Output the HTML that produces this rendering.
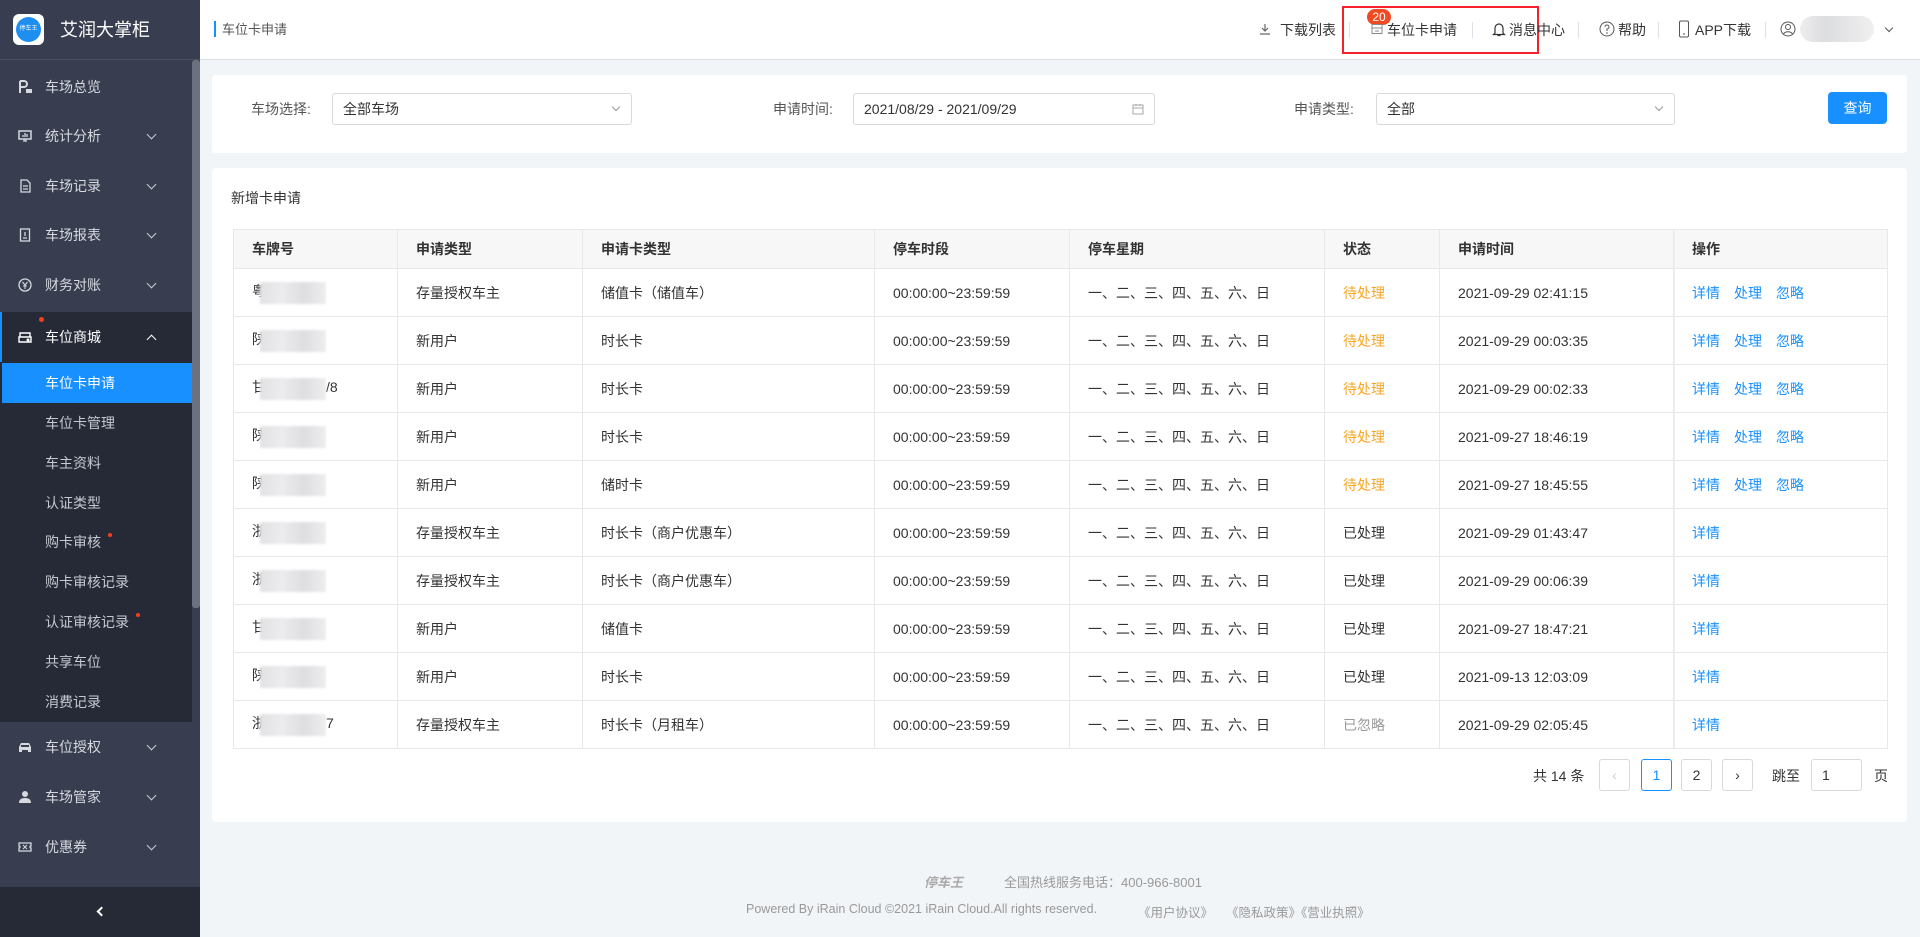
<!DOCTYPE html>
<html><head><meta charset="utf-8">
<style>
*{margin:0;padding:0;box-sizing:border-box}
body{width:1920px;height:937px;overflow:hidden;background:#f2f5f8;font-family:"Liberation Sans","Noto Sans CJK SC",sans-serif;font-size:14px;color:#333;position:relative}
.a{position:absolute}
.side{left:0;top:0;width:200px;height:937px;background:#383e4f}
.logo{left:0;top:0;width:200px;height:60px;background:#383e4f;border-bottom:1px solid #4a5061}
.mi{position:absolute;left:0;width:192px;height:50px;color:#d6d9e0;font-size:14px;line-height:50px}
.mi .ic{position:absolute;left:18px;top:18px;width:14px;height:14px}
.mi .t{position:absolute;left:45px}
.mi .ch{position:absolute;left:148px;top:20px;width:7px;height:7px;border-right:1.5px solid #c8ccd4;border-bottom:1.5px solid #c8ccd4;transform:rotate(45deg)}
.si{position:absolute;left:0;width:192px;height:40px;line-height:40px;padding-left:45px;color:#c6c9d0;font-size:14px}
.dot{position:absolute;width:5px;height:5px;border-radius:50%;background:#f5401e}
.hdr{left:200px;top:0;width:1720px;height:60px;background:#fff;border-bottom:1px solid #dcdfe6}
.ht{position:absolute;top:21px;font-size:14px;color:#333;line-height:18px}
.sep{position:absolute;top:22px;width:1px;height:16px;background:#dcdfe6}
.card{background:#fff;border-radius:4px}
.lbl{position:absolute;font-size:14px;color:#555;line-height:20px}
.inp{position:absolute;height:32px;border:1px solid #d9d9d9;border-radius:3px;background:#fff;font-size:14px;color:#333;line-height:30px;padding-left:10px}
.inp .dd{position:absolute;right:12px;top:10px;width:6px;height:6px;border-right:1px solid #999;border-bottom:1px solid #999;transform:rotate(45deg)}
table{border-collapse:collapse;position:absolute;left:233px;top:229px;width:1654px;table-layout:fixed}
td,th{border:1px solid #e8e8e8;height:48px;padding-left:18px;text-align:left;font-size:14px;white-space:nowrap}
th{background:#f7f7f7;font-weight:bold;height:39px;color:#333}
.o{color:#f5a623}.g{color:#999}
.lk{color:#1890ff;margin-right:14px}
.blur{display:inline-block;vertical-align:middle;width:66px;height:22px;background:linear-gradient(90deg,#e2e2e4,#ececee,#dedee1,#eeeeef);margin-left:-6px;filter:blur(1px)}
.pg{position:absolute;top:759px;width:31px;height:32px;border:1px solid #d9d9d9;border-radius:3px;text-align:center;line-height:30px;font-size:14px;color:#333;background:#fff}
</style></head><body>
<div class="a side"></div>
<div class="a logo">
 <div class="a" style="left:13px;top:14px;width:31px;height:31px;border-radius:6px;background:#fff"><div class="a" style="left:3px;top:3px;width:25px;height:25px;border-radius:50%;background:#1e8ef0;color:#fff;font-size:6px;line-height:25px;text-align:center">停车王</div></div>
 <div class="a" style="left:60px;top:18px;color:#fff;font-size:18px;line-height:24px">艾润大掌柜</div>
</div>
<div class="a" style="left:192px;top:60px;width:8px;height:548px;background:#6c717f;border-radius:3px"></div>

<div class="mi" style="top:62px"><svg class="ic" viewBox="0 0 14 14"><path d="M2 1v12M2 1h4a3 3 0 0 1 0 6H2" stroke="#d6d9e0" stroke-width="2" fill="none"/><rect x="8" y="9" width="6" height="4" fill="#d6d9e0"/></svg><span class="t">车场总览</span></div>
<div class="mi" style="top:111px"><svg class="ic" viewBox="0 0 14 14"><rect x="1" y="2" width="12" height="8" stroke="#d6d9e0" fill="none" stroke-width="1.5"/><path d="M5 12h4M7 10v2M5 8V6M7 8V4M9 8V5" stroke="#d6d9e0" stroke-width="1.3"/></svg><span class="t">统计分析</span><span class="ch"></span></div>
<div class="mi" style="top:161px"><svg class="ic" viewBox="0 0 14 14"><path d="M3 1h6l3 3v9H3z M5 7h5M5 10h5" stroke="#d6d9e0" fill="none" stroke-width="1.3"/></svg><span class="t">车场记录</span><span class="ch"></span></div>
<div class="mi" style="top:210px"><svg class="ic" viewBox="0 0 14 14"><rect x="2.5" y="1" width="9" height="12" stroke="#d6d9e0" fill="none" stroke-width="1.3"/><path d="M5 10h4M7 4v4" stroke="#d6d9e0" stroke-width="1.3"/></svg><span class="t">车场报表</span><span class="ch"></span></div>
<div class="mi" style="top:260px"><svg class="ic" viewBox="0 0 14 14"><circle cx="7" cy="7" r="6" stroke="#d6d9e0" fill="none" stroke-width="1.3"/><path d="M4.5 4l2.5 3 2.5-3M7 7v4M5 8h4" stroke="#d6d9e0" fill="none" stroke-width="1.1"/></svg><span class="t">财务对账</span><span class="ch"></span></div>

<div class="a" style="left:0;top:312px;width:192px;height:410px;background:#262a37"></div>
<div class="a" style="left:0;top:312px;width:2px;height:50px;background:#1890ff"></div>
<div class="mi" style="top:312px;color:#fff"><svg class="ic" viewBox="0 0 14 14"><path d="M2 3h10v4H2z M1 7h12v5H1z" stroke="#fff" fill="none" stroke-width="1.4"/><circle cx="10" cy="10" r="1.5" fill="#fff"/></svg><span class="t">车位商城</span><span class="ch" style="transform:rotate(225deg);top:24px;border-color:#fff"></span></div>
<div class="dot" style="left:39px;top:317px"></div>
<div class="si" style="top:363px;left:2px;width:190px;padding-left:43px;background:#1890ff;color:#fff">车位卡申请</div>
<div class="si" style="top:403px">车位卡管理</div>
<div class="si" style="top:443px">车主资料</div>
<div class="si" style="top:483px">认证类型</div>
<div class="si" style="top:522px">购卡审核</div>
<div class="dot" style="left:108px;top:533px;width:4px;height:4px"></div>
<div class="si" style="top:562px">购卡审核记录</div>
<div class="si" style="top:602px">认证审核记录</div>
<div class="dot" style="left:136px;top:613px;width:4px;height:4px"></div>
<div class="si" style="top:642px">共享车位</div>
<div class="si" style="top:682px">消费记录</div>

<div class="mi" style="top:722px"><svg class="ic" viewBox="0 0 14 14"><path d="M1 12V7l2-4h8l2 4v5h-3v-2H4v2z" fill="#d6d9e0"/><rect x="3" y="5" width="8" height="2" fill="#383e4f"/></svg><span class="t">车位授权</span><span class="ch"></span></div>
<div class="mi" style="top:772px"><svg class="ic" viewBox="0 0 14 14"><circle cx="7" cy="4" r="3" fill="#d6d9e0"/><path d="M1 13c0-4 3-5 6-5s6 1 6 5z" fill="#d6d9e0"/></svg><span class="t">车场管家</span><span class="ch"></span></div>
<div class="mi" style="top:822px"><svg class="ic" viewBox="0 0 14 14"><path d="M1 3h12v3a1 1 0 0 0 0 2v3H1V8a1 1 0 0 0 0-2z" stroke="#d6d9e0" fill="none" stroke-width="1.3"/><path d="M5 5l4 4M9 5L5 9" stroke="#d6d9e0" stroke-width="1"/></svg><span class="t">优惠券</span><span class="ch"></span></div>
<div class="a" style="left:0;top:887px;width:200px;height:50px;background:#262a37"></div>
<div class="a" style="left:98px;top:908px;width:7px;height:7px;border-left:2px solid #fff;border-bottom:2px solid #fff;transform:rotate(45deg)"></div>

<div class="a hdr">
 <div class="a" style="left:14px;top:21px;width:2px;height:16px;background:#1890ff"></div>
 <div class="ht" style="left:22px;font-size:13px;color:#555">车位卡申请</div>
 <svg class="a" style="left:1059px;top:23px" width="12" height="12" viewBox="0 0 12 12"><path d="M6 1v7M3 5l3 3 3-3M1 11h10" stroke="#666" fill="none" stroke-width="1.2"/></svg>
 <div class="ht" style="left:1080px">下载列表</div>
 <div class="sep" style="left:1149px"></div>
 <div class="a" style="left:1142px;top:6px;width:197px;height:48px;border:2px solid #f5222d"></div>
 <div class="a" style="left:1167px;top:9px;width:24px;height:16px;border-radius:8px;background:#f04a23;color:#fff;font-size:12px;text-align:center;line-height:16px">20</div>
 <svg class="a" style="left:1171px;top:23px" width="12" height="12" viewBox="0 0 12 12"><rect x="1" y="1.5" width="10" height="9" stroke="#888" fill="none"/><path d="M1 5h10M4 8h4" stroke="#888"/></svg>
 <div class="ht" style="left:1187px">车位卡申请</div>
 <div class="sep" style="left:1272px"></div>
 <svg class="a" style="left:1292px;top:21px" width="14" height="16" viewBox="0 0 14 16"><path d="M3 12V7a4 4 0 0 1 8 0v5l1.5 1.5h-11z M5.5 14.5h3" stroke="#333" fill="none" stroke-width="1.2"/></svg>
 <div class="ht" style="left:1309px">消息中心</div>
 <div class="sep" style="left:1378px"></div>
 <svg class="a" style="left:1399px;top:21px" width="16" height="16" viewBox="0 0 16 16"><circle cx="8" cy="8" r="7" stroke="#555" fill="none"/><path d="M6 6a2 2 0 1 1 2 2v2" stroke="#555" fill="none"/><circle cx="8" cy="12" r=".8" fill="#555"/></svg>
 <div class="ht" style="left:1418px">帮助</div>
 <div class="sep" style="left:1458px"></div>
 <svg class="a" style="left:1478px;top:20px" width="12" height="18" viewBox="0 0 12 18"><rect x="1.5" y="1" width="9" height="16" rx="1.5" stroke="#555" fill="none"/><path d="M5 14h2" stroke="#555"/></svg>
 <div class="ht" style="left:1495px">APP下载</div>
 <div class="sep" style="left:1565px"></div>
 <svg class="a" style="left:1580px;top:21px" width="16" height="16" viewBox="0 0 16 16"><circle cx="8" cy="8" r="7" stroke="#555" fill="none"/><circle cx="8" cy="6" r="2.5" stroke="#555" fill="none"/><path d="M3.5 13a5 4 0 0 1 9 0" stroke="#555" fill="none"/></svg>
 <div class="a" style="left:1600px;top:16px;width:74px;height:26px;border-radius:13px;background:linear-gradient(90deg,#eee,#dcdde0,#e6e6e8,#f0f0f0)"></div>
 <div class="a" style="left:1686px;top:25px;width:6px;height:6px;border-right:1.3px solid #555;border-bottom:1.3px solid #555;transform:rotate(45deg)"></div>
</div>

<div class="a card" style="left:212px;top:75px;width:1695px;height:78px"></div>
<div class="lbl" style="left:251px;top:99px">车场选择:</div>
<div class="inp" style="left:332px;top:93px;width:300px">全部车场<span class="dd"></span></div>
<div class="lbl" style="left:773px;top:99px">申请时间:</div>
<div class="inp" style="left:853px;top:93px;width:302px">2021/08/29 - 2021/09/29<svg class="a" style="right:10px;top:9px" width="12" height="12" viewBox="0 0 12 12"><rect x="1" y="2" width="10" height="9" stroke="#aaa" fill="none"/><path d="M1 5h10M4 1v2M8 1v2" stroke="#aaa"/></svg></div>
<div class="lbl" style="left:1294px;top:99px">申请类型:</div>
<div class="inp" style="left:1376px;top:93px;width:299px">全部<span class="dd"></span></div>
<div class="a" style="left:1828px;top:92px;width:59px;height:32px;background:#1890ff;border-radius:4px;color:#fff;text-align:center;line-height:32px;font-size:14px">查询</div>

<div class="a card" style="left:212px;top:168px;width:1695px;height:654px"></div>
<div class="a" style="left:231px;top:188px;font-size:14px;color:#333">新增卡申请</div>
<table>
<colgroup><col style="width:164px"><col style="width:185px"><col style="width:292px"><col style="width:195px"><col style="width:255px"><col style="width:115px"><col style="width:234px"><col style="width:214px"></colgroup>
<tr><th>车牌号</th><th>申请类型</th><th>申请卡类型</th><th>停车时段</th><th>停车星期</th><th>状态</th><th>申请时间</th><th>操作</th></tr>
<tr><td>粤<span class="blur"></span></td><td>存量授权车主</td><td>储值卡（储值车）</td><td>00:00:00~23:59:59</td><td>一、二、三、四、五、六、日</td><td class="o">待处理</td><td>2021-09-29 02:41:15</td><td><span class="lk">详情</span><span class="lk">处理</span><span class="lk">忽略</span></td></tr>
<tr><td>陕<span class="blur"></span></td><td>新用户</td><td>时长卡</td><td>00:00:00~23:59:59</td><td>一、二、三、四、五、六、日</td><td class="o">待处理</td><td>2021-09-29 00:03:35</td><td><span class="lk">详情</span><span class="lk">处理</span><span class="lk">忽略</span></td></tr>
<tr><td>甘<span class="blur"></span>/8</td><td>新用户</td><td>时长卡</td><td>00:00:00~23:59:59</td><td>一、二、三、四、五、六、日</td><td class="o">待处理</td><td>2021-09-29 00:02:33</td><td><span class="lk">详情</span><span class="lk">处理</span><span class="lk">忽略</span></td></tr>
<tr><td>陕<span class="blur"></span></td><td>新用户</td><td>时长卡</td><td>00:00:00~23:59:59</td><td>一、二、三、四、五、六、日</td><td class="o">待处理</td><td>2021-09-27 18:46:19</td><td><span class="lk">详情</span><span class="lk">处理</span><span class="lk">忽略</span></td></tr>
<tr><td>陕<span class="blur"></span></td><td>新用户</td><td>储时卡</td><td>00:00:00~23:59:59</td><td>一、二、三、四、五、六、日</td><td class="o">待处理</td><td>2021-09-27 18:45:55</td><td><span class="lk">详情</span><span class="lk">处理</span><span class="lk">忽略</span></td></tr>
<tr><td>浙<span class="blur"></span></td><td>存量授权车主</td><td>时长卡（商户优惠车）</td><td>00:00:00~23:59:59</td><td>一、二、三、四、五、六、日</td><td>已处理</td><td>2021-09-29 01:43:47</td><td><span class="lk">详情</span></td></tr>
<tr><td>浙<span class="blur"></span></td><td>存量授权车主</td><td>时长卡（商户优惠车）</td><td>00:00:00~23:59:59</td><td>一、二、三、四、五、六、日</td><td>已处理</td><td>2021-09-29 00:06:39</td><td><span class="lk">详情</span></td></tr>
<tr><td>甘<span class="blur"></span></td><td>新用户</td><td>储值卡</td><td>00:00:00~23:59:59</td><td>一、二、三、四、五、六、日</td><td>已处理</td><td>2021-09-27 18:47:21</td><td><span class="lk">详情</span></td></tr>
<tr><td>陕<span class="blur"></span></td><td>新用户</td><td>时长卡</td><td>00:00:00~23:59:59</td><td>一、二、三、四、五、六、日</td><td>已处理</td><td>2021-09-13 12:03:09</td><td><span class="lk">详情</span></td></tr>
<tr><td>浙<span class="blur"></span>7</td><td>存量授权车主</td><td>时长卡（月租车）</td><td>00:00:00~23:59:59</td><td>一、二、三、四、五、六、日</td><td class="g">已忽略</td><td>2021-09-29 02:05:45</td><td><span class="lk">详情</span></td></tr>
</table>
<div class="a" style="left:1673px;top:229px;width:2px;height:519px;background:linear-gradient(90deg,#e4e4e4,#f4f4f4)"></div>

<div class="a" style="left:1533px;top:766px;font-size:14px">共 14 条</div>
<div class="pg" style="left:1599px;color:#ccc">‹</div>
<div class="pg" style="left:1641px;border-color:#1890ff;color:#1890ff">1</div>
<div class="pg" style="left:1681px">2</div>
<div class="pg" style="left:1722px">›</div>
<div class="a" style="left:1772px;top:766px;font-size:14px">跳至</div>
<div class="pg" style="left:1811px;width:51px;text-align:left;padding-left:10px">1</div>
<div class="a" style="left:1874px;top:766px;font-size:14px">页</div>

<div class="a" style="left:924px;top:872px;font-size:13px;color:#aaa;font-style:italic;font-weight:bold">停车王</div>
<div class="a" style="left:1004px;top:872px;font-size:13px;color:#999">全国热线服务电话：400-966-8001</div>
<div class="a" style="left:746px;top:902px;font-size:12.5px;color:#999">Powered By iRain Cloud ©2021 iRain Cloud.All rights reserved.</div>
<div class="a" style="left:1138px;top:902px;font-size:12.5px;color:#999">《用户协议》</div>
<div class="a" style="left:1226px;top:902px;font-size:12.5px;color:#999">《隐私政策》《营业执照》</div>
</body></html>
